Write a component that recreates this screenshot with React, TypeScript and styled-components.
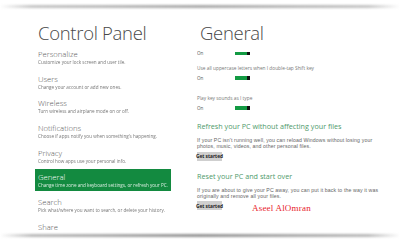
import React from 'react';
import styled, { createGlobalStyle } from 'styled-components';

const GlobalStyle = createGlobalStyle`
  html, body {
    margin: 0;
    padding: 0;
    background: #ffffff;
  }
  body {
    font-family: "Open Sans", "Noto Sans", sans-serif;
  }
`;

const menu = [
  { title: 'Personalize', desc: 'Customize your lock screen and user tile.' },
  { title: 'Users', desc: 'Change your account or add new ones.' },
  { title: 'Wireless', desc: 'Turn wireless and airplane mode on or off.' },
  { title: 'Notifications', desc: 'Choose if apps notify you when something\u2019s happening.' },
  { title: 'Privacy', desc: 'Control how apps use your personal info.' },
  { title: 'General', desc: 'Change time zone and keyboard settings, or refresh your PC.', active: true },
  { title: 'Search', desc: 'Pick what/where you want to search, or delete your history.' },
  { title: 'Share', desc: 'Pick what apps you use to share and how your info is shown.' },
];

function App() {
  return (
    <>
      <GlobalStyle />
      <Frame>
        <TopShadow />
        <Columns>
          <Sidebar>
            <PageTitle>Control Panel</PageTitle>
            <Menu>
              {menu.map(item => (
                <MenuItem key={item.title} $active={item.active}>
                  <ItemTitle>{item.title}</ItemTitle>
                  <ItemDesc>{item.desc}</ItemDesc>
                </MenuItem>
              ))}
            </Menu>
          </Sidebar>
          <Content>
            <PageTitle>General</PageTitle>
            <ClippedRow>
              <Setting>
                <SettingValue>On</SettingValue>
                <Toggle $thin />
              </Setting>
            </ClippedRow>
            <SettingBlock>
              <SettingLabel>Use all uppercase letters when I double-tap Shift key</SettingLabel>
              <Setting>
                <SettingValue>On</SettingValue>
                <Toggle />
              </Setting>
            </SettingBlock>
            <SettingBlock $gap={13}>
              <SettingLabel>Play key sounds as I type</SettingLabel>
              <Setting>
                <SettingValue>On</SettingValue>
                <Toggle />
              </Setting>
            </SettingBlock>
            <Section>
              <SectionTitle>Refresh your PC without affecting your files</SectionTitle>
              <SectionText>
                <TextLine>If your PC isn&apos;t running well, you can reload Windows without losing your</TextLine>
                <TextLine>photos, music, videos, and other personal files.</TextLine>
              </SectionText>
              <ButtonRow>
                <Button>Get started</Button>
              </ButtonRow>
            </Section>
            <Section>
              <SectionTitle>Reset your PC and start over</SectionTitle>
              <SectionText>
                <TextLine>If you are about to give your PC away, you can put it back to the way it was</TextLine>
                <TextLine>originally and remove all your files.</TextLine>
              </SectionText>
              <ButtonRow>
                <Button>Get started</Button>
                <Signature>Aseel AlOmran</Signature>
              </ButtonRow>
            </Section>
          </Content>
        </Columns>
        <BottomShadow />
      </Frame>
    </>
  );
}

export default App;

const Frame = styled.div`
  position: relative;
  width: 400px;
  height: 242px;
  overflow: hidden;
  background: #ffffff;
`;

const TopShadow = styled.div`
  height: 3px;
  margin-top: 5px;
  background: linear-gradient(
    to right,
    rgba(150, 150, 150, 0) 0%,
    rgba(150, 150, 150, 0.55) 8%,
    rgba(140, 140, 140, 0.75) 50%,
    rgba(150, 150, 150, 0.55) 92%,
    rgba(150, 150, 150, 0) 100%
  );
  filter: blur(0.8px);
`;

const BottomShadow = styled.div`
  position: absolute;
  left: 0;
  right: 0;
  top: 232px;
  height: 10px;
  background: #ffffff;

  &::before {
    content: '';
    position: absolute;
    left: 0;
    right: 0;
    top: 2px;
    height: 3px;
    background: linear-gradient(
      to right,
      rgba(150, 150, 150, 0) 0%,
      rgba(140, 140, 140, 0.6) 8%,
      rgba(120, 120, 120, 0.8) 50%,
      rgba(140, 140, 140, 0.6) 92%,
      rgba(150, 150, 150, 0) 100%
    );
    filter: blur(0.8px);
  }
`;

const Columns = styled.div`
  display: flex;
  padding-left: 35px;
  gap: 29px;
  margin-top: 12px;
`;

const Sidebar = styled.div`
  width: 136px;
  display: flex;
  flex-direction: column;
`;

const PageTitle = styled.div`
  font-family: "Open Sans", sans-serif;
  font-weight: 300;
  font-size: 18.5px;
  line-height: 26px;
  color: #484848;
  letter-spacing: -0.3px;
  padding-left: 3px;
  height: 26px;
`;

const Menu = styled.div`
  display: flex;
  flex-direction: column;
  gap: 2.7px;
`;

const MenuItem = styled.div<{ $active?: boolean }>`
  height: 22px;
  padding: 3px 0 0 3px;
  box-sizing: border-box;
  background: ${p => (p.$active ? '#138a40' : 'transparent')};
  color: ${p => (p.$active ? '#ffffff' : '#5c5c5c')};
`;

const ItemTitle = styled.div`
  font-size: 7.7px;
  line-height: 10px;
  font-weight: 300;
`;

const ItemDesc = styled.div`
  font-size: 4.6px;
  line-height: 6px;
  opacity: 0.85;
  white-space: nowrap;
`;

const Content = styled.div`
  display: flex;
  flex-direction: column;
  margin-left: -3px;
`;

const ClippedRow = styled.div`
  height: 7px;
  overflow: hidden;
  display: flex;
  align-items: flex-end;
  margin-top: 4px;
`;

const Setting = styled.div`
  display: flex;
  align-items: center;
  height: 8px;
`;

const SettingValue = styled.span`
  width: 38px;
  font-size: 4.6px;
  color: #555555;
`;

const Toggle = styled.span<{ $thin?: boolean }>`
  width: 12px;
  height: ${p => (p.$thin ? 3 : 4)}px;
  background: #139a43;
  border-right: 3px solid #111111;
`;

const SettingBlock = styled.div<{ $gap?: number }>`
  display: flex;
  flex-direction: column;
  gap: 3px;
  margin-top: ${p => p.$gap ?? 8}px;
`;

const SettingLabel = styled.div`
  font-size: 4.8px;
  line-height: 6px;
  color: #777777;
  white-space: nowrap;
`;

const Section = styled.div`
  display: flex;
  flex-direction: column;
  margin-top: 9px;
  & + & {
    margin-top: 10px;
  }
`;

const SectionTitle = styled.div`
  font-size: 7.2px;
  line-height: 10px;
  color: #4f9a6c;
  font-weight: 400;
  white-space: nowrap;
`;

const SectionText = styled.div`
  display: flex;
  flex-direction: column;
  margin-top: 6px;
`;

const TextLine = styled.div`
  font-family: "Liberation Sans", Arial, sans-serif;
  font-size: 5.2px;
  line-height: 6px;
  height: 6px;
  letter-spacing: 0.12px;
  color: #666666;
  white-space: nowrap;
`;

const ButtonRow = styled.div`
  display: flex;
  align-items: flex-end;
  margin-top: 2.5px;
`;

const Button = styled.div`
  width: 25px;
  height: 9px;
  background: #cfcfcf;
  color: #222222;
  font-size: 4.8px;
  font-weight: 700;
  white-space: nowrap;
  display: flex;
  align-items: center;
  justify-content: center;
`;

const Signature = styled.div`
  margin-left: 30px;
  font-family: "Liberation Serif", serif;
  font-size: 9px;
  line-height: 9px;
  color: #e8232b;
  margin-bottom: -3px;
  letter-spacing: 0.2px;
`;
